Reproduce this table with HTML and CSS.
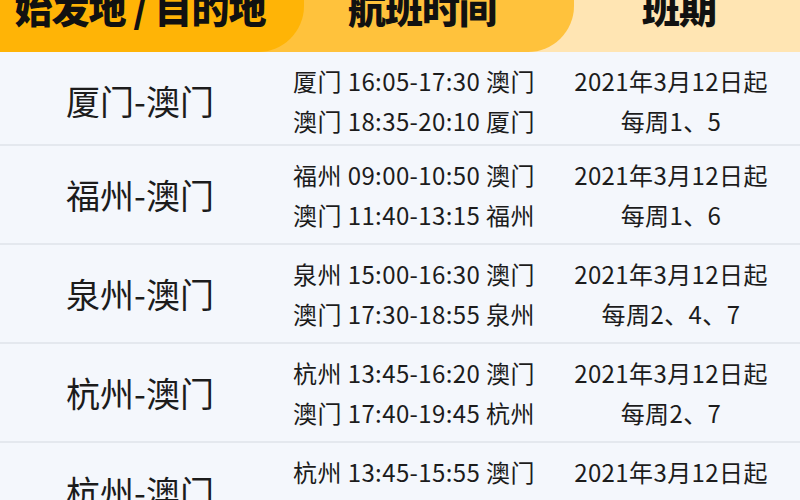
FILE: index.html
```html
<!DOCTYPE html>
<html lang="zh">
<head>
<meta charset="utf-8">
<link rel="stylesheet" href="styles.css">
</head>
<body>
<div class="page">
  <div class="header">
    <div class="tab2">
      <div class="tab1"><span class="htext">始发地 / 目的地</span></div>
      <div class="hcell2"><span class="htext">航班时间</span></div>
    </div>
    <div class="hcell3"><span class="htext">班期</span></div>
  </div>
  <div class="rows">
    <div class="row first">
      <div class="route">厦门-澳门</div>
      <div class="times"><div>厦门 16:05-17:30 澳门</div><div>澳门 18:35-20:10 厦门</div></div>
      <div class="sched"><div>2021年3月12日起</div><div>每周1、5</div></div>
    </div>
    <div class="row">
      <div class="route">福州-澳门</div>
      <div class="times"><div>福州 09:00-10:50 澳门</div><div>澳门 11:40-13:15 福州</div></div>
      <div class="sched"><div>2021年3月12日起</div><div>每周1、6</div></div>
    </div>
    <div class="row">
      <div class="route">泉州-澳门</div>
      <div class="times"><div>泉州 15:00-16:30 澳门</div><div>澳门 17:30-18:55 泉州</div></div>
      <div class="sched"><div>2021年3月12日起</div><div>每周2、4、7</div></div>
    </div>
    <div class="row">
      <div class="route">杭州-澳门</div>
      <div class="times"><div>杭州 13:45-16:20 澳门</div><div>澳门 17:40-19:45 杭州</div></div>
      <div class="sched"><div>2021年3月12日起</div><div>每周2、7</div></div>
    </div>
    <div class="row">
      <div class="route">杭州-澳门</div>
      <div class="times"><div>杭州 13:45-15:55 澳门</div><div>澳门 16:45-18:50 杭州</div></div>
      <div class="sched"><div>2021年3月12日起</div><div>每周2、7</div></div>
    </div>
  </div>
</div>
</body>
</html>
```

FILE: styles.css
```css
html, body {
  margin: 0;
  padding: 0;
  width: 800px;
  height: 500px;
  overflow: hidden;
  background: #f4f7fc;
}
.page {
  width: 800px;
  font-family: "Noto Sans CJK SC", "Noto Sans", sans-serif;
  color: #1c1c1c;
}
.header {
  display: flex;
  height: 52px;
  background: #ffe5b3;
  overflow: hidden;
}
.tab2 {
  display: flex;
  width: 574px;
  background: #ffc23c;
  border-bottom-right-radius: 46px;
}
.tab1 {
  width: 304px;
  background: #ffb406;
  border-bottom-right-radius: 46px;
  display: flex;
  justify-content: center;
  padding-right: 24px;
  box-sizing: border-box;
}
.hcell2 {
  flex: 1;
  display: flex;
  justify-content: center;
  padding-right: 34px;
}
.hcell3 {
  flex: 1;
  display: flex;
  justify-content: center;
  padding-right: 16px;
}
.htext {
  font-size: 38px;
  font-weight: 900;
  line-height: 1;
  color: #111;
  margin-top: -12px;
  letter-spacing: -1px;
  white-space: nowrap;
}
.row {
  display: grid;
  grid-template-columns: 280px 268px 252px;
  height: 97px;
  border-bottom: 2px solid #e4e8ee;
  align-items: center;
}
.row.first {
  height: 94px;
  box-sizing: border-box;
  padding-top: 6px;
}
.route {
  text-align: center;
  font-size: 34px;
  line-height: 1;
}
.times, .sched {
  text-align: center;
  font-size: 24px;
  line-height: 40px;
  letter-spacing: 0.4px;
  white-space: nowrap;
}
.sched {
  padding-right: 6px;
}
```
